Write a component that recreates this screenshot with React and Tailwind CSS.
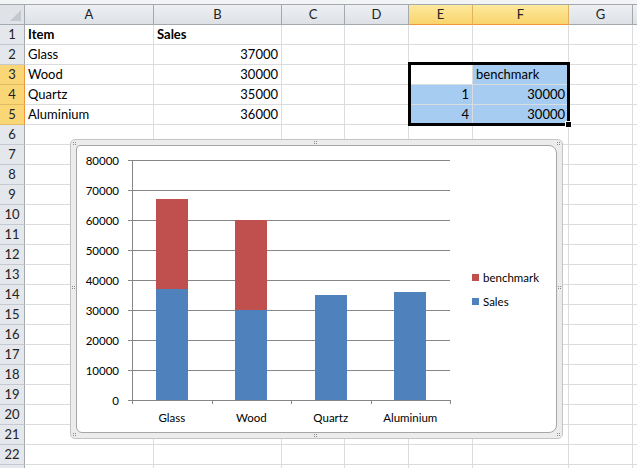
import React from 'react';

const COLS = ['A', 'B', 'C', 'D', 'E', 'F', 'G', ''];
const SELECTED_COLS = ['E', 'F'];
const SELECTED_ROWS = [3, 4, 5];

// cell contents keyed by row then column
const cells = {
  1: { A: { v: 'Item', bold: true }, B: { v: 'Sales', bold: true } },
  2: { A: { v: 'Glass' }, B: { v: '37000', num: true } },
  3: { A: { v: 'Wood' }, B: { v: '30000', num: true }, F: { v: 'benchmark' } },
  4: { A: { v: 'Quartz' }, B: { v: '35000', num: true }, E: { v: '1', num: true }, F: { v: '30000', num: true } },
  5: { A: { v: 'Aluminium' }, B: { v: '36000', num: true }, E: { v: '4', num: true }, F: { v: '30000', num: true } },
};

const highlighted = ['E4', 'E5', 'F3', 'F4', 'F5'];

const font = { fontFamily: 'Lato, "Open Sans", sans-serif' };

// chart data
const items = [
  { name: 'Glass', sales: 37000, bench: 30000 },
  { name: 'Wood', sales: 30000, bench: 30000 },
  { name: 'Quartz', sales: 35000, bench: 0 },
  { name: 'Aluminium', sales: 36000, bench: 0 },
];

// page coords -> inner chart coords
const OX = 77;
const OY = 146;
const X = (v) => v - OX;
const Y = (v) => v - OY;
const AXIS_L = 132;
const AXIS_R = 450;
const BASE = 400;
const PER = 30 / 10000;

const Dots = ({ className }) => (
  <div className={`absolute grid grid-cols-2 gap-[1px] ${className}`}>
    <span className="w-[1px] h-[1px] bg-[#8a8a8a]" />
    <span className="w-[1px] h-[1px] bg-[#8a8a8a]" />
    <span className="w-[1px] h-[1px] bg-[#8a8a8a]" />
    <span className="w-[1px] h-[1px] bg-[#8a8a8a]" />
  </div>
);

const Chart = () => {
  const catW = (AXIS_R - AXIS_L) / 4;
  const gridVals = [0, 1, 2, 3, 4, 5, 6, 7, 8];

  return (
    <div className="absolute left-[70px] top-[139px] w-[493px] h-[300px] rounded-[5px] border border-[#c4c4c4] bg-[#ececec] p-[5px]">
      <Dots className="left-[2px] top-[2px]" />
      <Dots className="right-[2px] top-[2px]" />
      <Dots className="left-[2px] bottom-[2px]" />
      <Dots className="right-[2px] bottom-[2px]" />
      <Dots className="left-[243px] top-[1px]" />
      <Dots className="left-[243px] bottom-[1px]" />
      <Dots className="left-[1px] top-[146px]" />
      <Dots className="right-[1px] top-[146px]" />
      <div className="relative w-full h-full bg-white border border-[#a6a6a6] rounded-tl-[4px] rounded-tr-[8px] rounded-bl-[6px] rounded-br-[8px] overflow-hidden">
        <svg className="absolute inset-0" width="479" height="288" style={font}>
          {gridVals.map((g) => {
            const y = Y(BASE - g * 30) + 0.5;
            return (
              <g key={g}>
                <line x1={X(128)} x2={X(AXIS_R)} y1={y} y2={y} stroke="#868686" strokeWidth="1" />
                <text x={X(119)} y={y} textAnchor="end" dominantBaseline="central" fontSize="11.5" fill="#000">
                  {g * 10000}
                </text>
              </g>
            );
          })}
          <line x1={X(AXIS_L) + 0.5} x2={X(AXIS_L) + 0.5} y1={Y(160)} y2={Y(404)} stroke="#868686" />
          {[0, 1, 2, 3, 4].map((i) => {
            const x = Math.round(X(AXIS_L + i * catW)) + 0.5;
            return <line key={i} x1={x} x2={x} y1={Y(BASE)} y2={Y(404)} stroke="#868686" />;
          })}
          {items.map((it, i) => {
            const cx = AXIS_L + catW * (i + 0.5);
            const left = Math.round(cx - 16);
            const salesTop = BASE - it.sales * PER;
            const benchTop = salesTop - it.bench * PER;
            return (
              <g key={it.name}>
                <rect x={X(left)} y={Y(salesTop)} width="32" height={it.sales * PER} fill="#4f81bd" />
                {it.bench > 0 && (
                  <rect x={X(left)} y={Y(benchTop)} width="32" height={it.bench * PER} fill="#c0504d" />
                )}
                <text x={X(cx)} y={Y(417)} textAnchor="middle" dominantBaseline="central" fontSize="11.5" fill="#000">
                  {it.name}
                </text>
              </g>
            );
          })}
          <rect x={X(472)} y={Y(274)} width="7" height="7" fill="#c0504d" />
          <text x={X(483)} y={Y(277.5)} dominantBaseline="central" fontSize="11.5" fill="#000">benchmark</text>
          <rect x={X(472)} y={Y(298)} width="7" height="7" fill="#4f81bd" />
          <text x={X(483)} y={Y(301.5)} dominantBaseline="central" fontSize="11.5" fill="#000">Sales</text>
        </svg>
      </div>
    </div>
  );
};

const App = () => {
  const rows = Array.from({ length: 23 }, (_, i) => i + 1);

  return (
    <div className="relative w-[637px] h-[468px] overflow-hidden bg-white text-[13px] text-black" style={font}>
      <div className="h-[5px] bg-[#f3f4f6] border-b border-[#a4a9ae]" />
      <div className="grid grid-cols-[25px_129px_128px_63px_64px_64px_96px_64px_1fr] auto-rows-[20px]">
        {/* header row */}
        <div className="relative bg-[#dfe3e8] border-r border-b border-[#a4a9ae]">
          <div className="absolute right-[3px] bottom-[3px] w-0 h-0 border-l-[11px] border-l-transparent border-b-[11px] border-b-[#c3c8ce]" />
        </div>
        {COLS.map((c, i) => {
          const sel = SELECTED_COLS.includes(c);
          return (
            <div
              key={`h${i}`}
              className={`flex items-center justify-center border-r border-b text-[#222] ${
                sel
                  ? 'bg-gradient-to-b from-[#fde99d] to-[#f9d46b] border-r-[#e0b45c] border-b-[#f29536]'
                  : 'bg-gradient-to-b from-[#eef0f3] to-[#dde1e6] border-[#a4a9ae]'
              }`}
            >
              {c}
            </div>
          );
        })}

        {rows.map((r) => {
          const rowSel = SELECTED_ROWS.includes(r);
          return (
            <React.Fragment key={r}>
              <div
                className={`flex items-center justify-center border-r border-b text-[#222] ${
                  rowSel
                    ? 'bg-[#f9d777] border-r-[#f29536] border-b-[#e3b964]'
                    : 'bg-[#e4e7eb] border-r-[#a4a9ae] border-b-[#c6cad0]'
                }`}
              >
                {r < 23 ? r : ''}
              </div>
              {COLS.map((c, i) => {
                const cell = cells[r]?.[c];
                const hl = highlighted.includes(`${c}${r}`);
                return (
                  <div
                    key={`${r}${i}`}
                    className={`flex items-center px-[3px] border-r border-b border-[#dadcdd] ${
                      hl ? 'bg-[#a6cdf1]' : 'bg-white'
                    } ${cell?.num ? 'justify-end' : 'justify-start'} ${cell?.bold ? 'font-bold' : ''}`}
                  >
                    {cell?.v}
                  </div>
                );
              })}
            </React.Fragment>
          );
        })}
      </div>

      {/* selection outline E3:F5 */}
      <div className="absolute left-[408px] top-[62px] w-[162px] h-[64px] border-[3px] border-black pointer-events-none" />
      <div className="absolute left-[565px] top-[121px] w-[7px] h-[7px] bg-black border border-white" />

      <Chart />
    </div>
  );
};

export default App;
